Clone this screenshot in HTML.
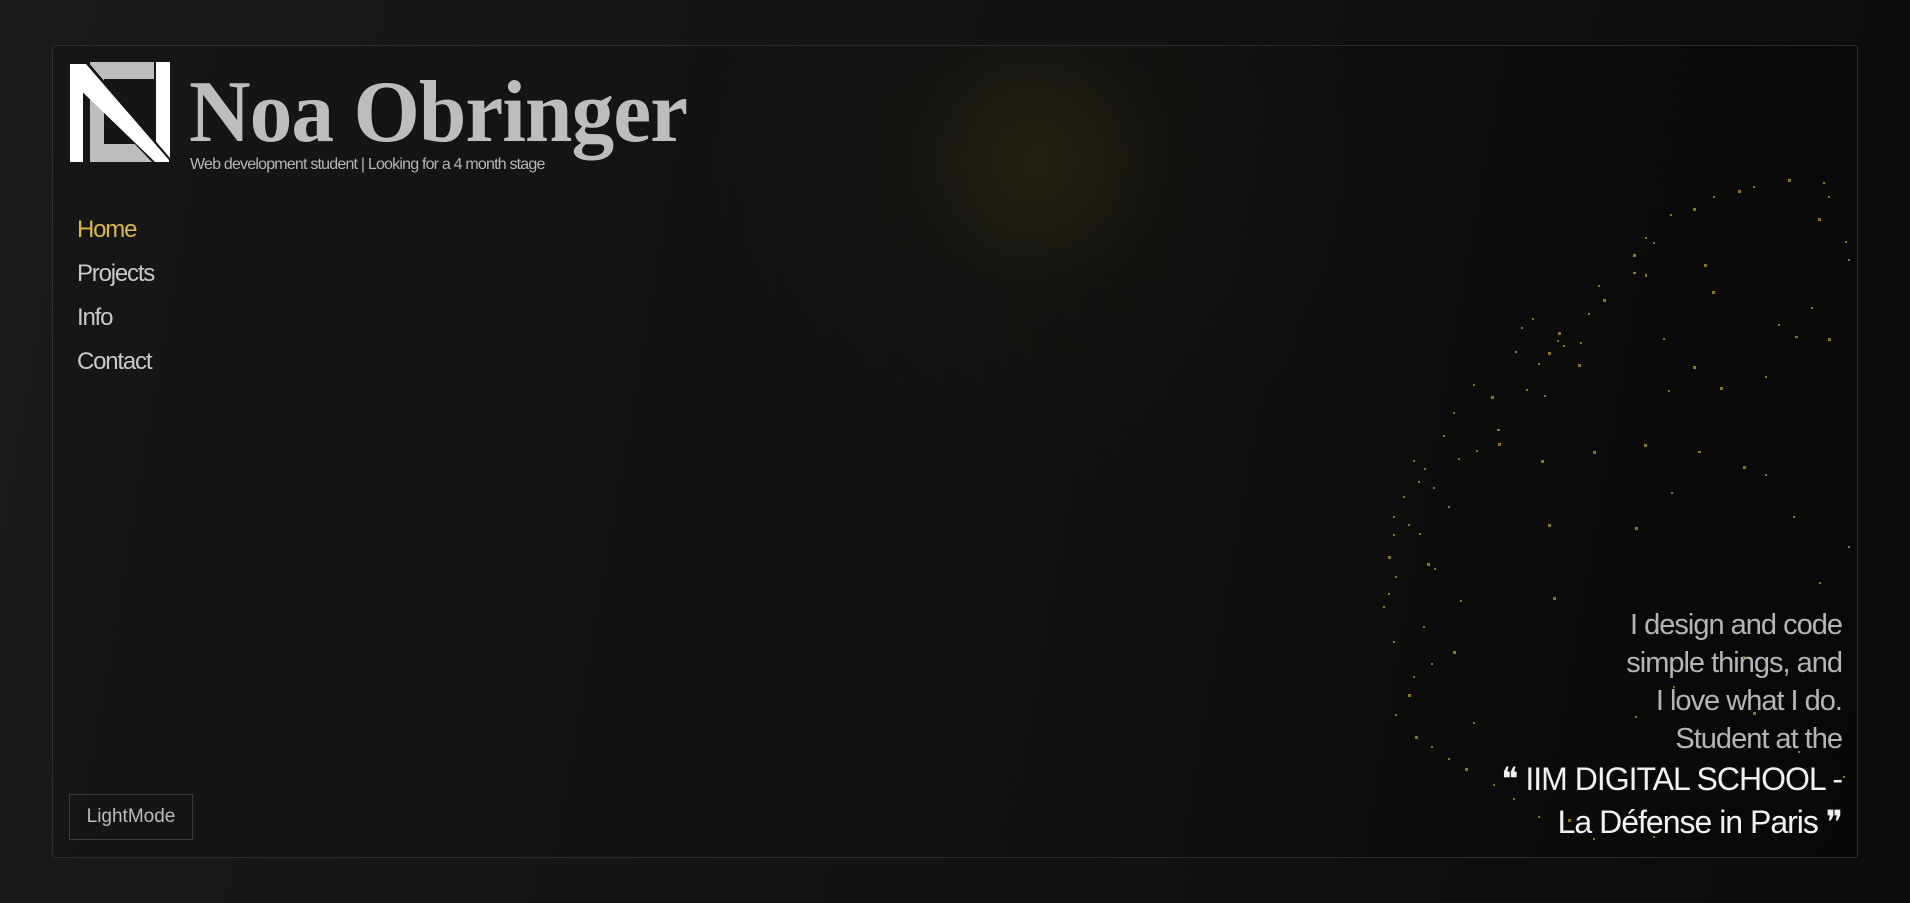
<!DOCTYPE html>
<html><head><meta charset="utf-8"><style>
html,body{margin:0;width:1910px;height:903px;overflow:hidden;background:#151515;font-family:"Liberation Sans",sans-serif;}
body{background:linear-gradient(100deg,#1a1a1a 0%,#131313 50%,#0b0b0b 100%);}
.frame{position:absolute;left:52px;top:45px;width:1804px;height:811px;border:1px solid #2c2c2c;border-radius:4px;
background:radial-gradient(circle at 985px 115px,rgba(70,60,20,.35) 0,rgba(40,35,15,.15) 130px,rgba(0,0,0,0) 330px),linear-gradient(100deg,#161616 0%,#121212 50%,#070707 100%);overflow:hidden;}
.logo{position:absolute;left:17px;top:16px;width:100px;height:100px;}
h1{position:absolute;left:136px;top:16px;margin:0;font-family:"Liberation Serif",serif;font-weight:bold;font-size:88px;letter-spacing:-1px;color:#bdbdbd;transform:scaleX(0.97);transform-origin:left;}
.sub{position:absolute;left:137px;top:110px;font-size:16px;color:#b5b5b5;letter-spacing:-.8px;}
nav{position:absolute;left:24px;top:170px;}
nav div{font-size:24px;color:#c9c9c9;height:44px;letter-spacing:-1.2px;}
nav div.a{color:#d9b84a;}
.btn{position:absolute;left:16px;top:748px;width:124px;height:46px;border:1px solid #3a3a3a;box-sizing:border-box;color:#bbb;font-size:19px;text-align:center;line-height:44px;}
.q{position:absolute;right:15px;top:560px;text-align:right;color:#b5b5b5;font-size:29px;line-height:38px;letter-spacing:-1px;}
.q .w{color:#f2f2f2;font-size:32px;line-height:43px;}
svg.dots{position:absolute;left:0;top:0;}
</style></head><body>
<div class="frame">
<svg class="dots" width="1804" height="811">
<g fill="#8a7428">
<rect x="1640" y="162" width="3" height="3"/><rect x="1660" y="150" width="2" height="2"/><rect x="1685" y="144" width="3" height="3"/><rect x="1700" y="140" width="2" height="2"/><rect x="1735" y="133" width="3" height="3"/><rect x="1770" y="136" width="2" height="2"/><rect x="1775" y="150" width="2" height="2"/><rect x="1765" y="172" width="3" height="3"/><rect x="1792" y="195" width="2" height="2"/><rect x="1795" y="213" width="2" height="2"/>
<rect x="1592" y="191" width="2" height="2"/><rect x="1600" y="196" width="2" height="2"/><rect x="1580" y="208" width="3" height="3"/><rect x="1617" y="168" width="2" height="2"/><rect x="1651" y="218" width="3" height="3"/><rect x="1580" y="226" width="3" height="2"/><rect x="1592" y="228" width="2" height="3"/><rect x="1545" y="239" width="2" height="2"/><rect x="1550" y="253" width="3" height="3"/><rect x="1535" y="267" width="2" height="2"/>
<rect x="1479" y="272" width="2" height="2"/><rect x="1468" y="281" width="2" height="2"/><rect x="1505" y="286" width="3" height="3"/><rect x="1527" y="296" width="2" height="2"/><rect x="1504" y="294" width="2" height="2"/><rect x="1510" y="299" width="2" height="2"/><rect x="1495" y="306" width="3" height="3"/><rect x="1525" y="318" width="3" height="3"/><rect x="1485" y="317" width="2" height="2"/><rect x="1462" y="305" width="2" height="2"/>
<rect x="1610" y="292" width="2" height="2"/><rect x="1659" y="245" width="3" height="3"/><rect x="1725" y="278" width="2" height="2"/><rect x="1742" y="290" width="3" height="2"/><rect x="1775" y="292" width="3" height="3"/><rect x="1758" y="261" width="2" height="2"/><rect x="1640" y="320" width="3" height="3"/><rect x="1667" y="341" width="3" height="3"/><rect x="1712" y="330" width="2" height="2"/><rect x="1615" y="344" width="2" height="2"/>
<rect x="1473" y="343" width="2" height="2"/><rect x="1491" y="349" width="2" height="2"/><rect x="1420" y="338" width="2" height="2"/><rect x="1438" y="350" width="3" height="3"/><rect x="1400" y="366" width="2" height="2"/><rect x="1444" y="383" width="3" height="2"/><rect x="1445" y="397" width="3" height="3"/><rect x="1423" y="404" width="2" height="2"/><rect x="1405" y="412" width="2" height="2"/><rect x="1390" y="389" width="2" height="2"/>
<rect x="1591" y="398" width="3" height="3"/><rect x="1540" y="405" width="3" height="3"/><rect x="1488" y="414" width="3" height="3"/><rect x="1645" y="405" width="3" height="2"/><rect x="1690" y="420" width="3" height="3"/><rect x="1712" y="428" width="2" height="2"/><rect x="1360" y="414" width="2" height="2"/><rect x="1371" y="422" width="2" height="2"/><rect x="1365" y="435" width="2" height="2"/><rect x="1350" y="450" width="2" height="2"/>
<rect x="1380" y="441" width="2" height="2"/><rect x="1395" y="460" width="2" height="2"/><rect x="1340" y="470" width="2" height="2"/><rect x="1355" y="478" width="2" height="2"/><rect x="1366" y="487" width="2" height="2"/><rect x="1340" y="488" width="2" height="2"/><rect x="1495" y="478" width="3" height="3"/><rect x="1582" y="481" width="3" height="3"/><rect x="1618" y="446" width="2" height="2"/><rect x="1740" y="470" width="2" height="2"/>
<rect x="1335" y="510" width="3" height="3"/><rect x="1342" y="530" width="2" height="2"/><rect x="1335" y="547" width="2" height="2"/><rect x="1374" y="517" width="3" height="3"/><rect x="1381" y="522" width="2" height="2"/><rect x="1330" y="560" width="2" height="2"/><rect x="1407" y="554" width="2" height="2"/><rect x="1500" y="551" width="3" height="3"/><rect x="1370" y="580" width="2" height="2"/><rect x="1340" y="595" width="2" height="2"/>
<rect x="1400" y="605" width="3" height="3"/><rect x="1378" y="617" width="2" height="2"/><rect x="1360" y="630" width="2" height="2"/><rect x="1355" y="648" width="3" height="3"/><rect x="1342" y="668" width="2" height="2"/><rect x="1420" y="676" width="2" height="2"/><rect x="1362" y="690" width="3" height="3"/><rect x="1378" y="700" width="2" height="2"/><rect x="1395" y="712" width="2" height="2"/><rect x="1412" y="722" width="3" height="3"/>
<rect x="1440" y="738" width="2" height="2"/><rect x="1460" y="752" width="2" height="2"/><rect x="1485" y="770" width="2" height="2"/><rect x="1515" y="773" width="3" height="3"/><rect x="1540" y="792" width="2" height="2"/><rect x="1600" y="790" width="2" height="2"/><rect x="1700" y="768" width="2" height="2"/><rect x="1760" y="780" width="2" height="2"/><rect x="1790" y="730" width="2" height="2"/><rect x="1745" y="705" width="2" height="2"/>
<rect x="1732" y="578" width="2" height="2"/><rect x="1766" y="536" width="2" height="2"/><rect x="1795" y="500" width="2" height="2"/><rect x="1690" y="610" width="2" height="2"/><rect x="1700" y="666" width="3" height="3"/><rect x="1650" y="648" width="2" height="2"/><rect x="1620" y="640" width="2" height="2"/><rect x="1582" y="670" width="2" height="2"/>
</g></svg>
<svg class="logo" viewBox="0 0 100 100">
<rect x="20" y="0" width="64" height="100" fill="#bdbdbd"/>
<rect x="34" y="17" width="50" height="65" fill="#151515"/>
<rect x="0" y="0" width="13" height="100" fill="#fff"/>
<rect x="86" y="0" width="14" height="100" fill="#fff"/>
<polygon points="0,0 18,0 100,96 100,100 82,100 0,15" fill="#151515"/>
<polygon points="0,2 16,2 99,98 99,100 85,100 0,18" fill="#fff"/>
<polygon points="13,2 13,18 0,2" fill="#fff"/>
</svg>
<h1>Noa Obringer</h1>
<div class="sub">Web development student | Looking for a 4 month stage</div>
<nav><div class="a">Home</div><div>Projects</div><div>Info</div><div>Contact</div></nav>
<div class="btn">LightMode</div>
<div class="q">I design and code<br>simple things, and<br>I love what I do.<br>Student at the<br><span class="w">❝ IIM DIGITAL SCHOOL -<br>La Défense in Paris ❞</span></div>
</div>
</body></html>
